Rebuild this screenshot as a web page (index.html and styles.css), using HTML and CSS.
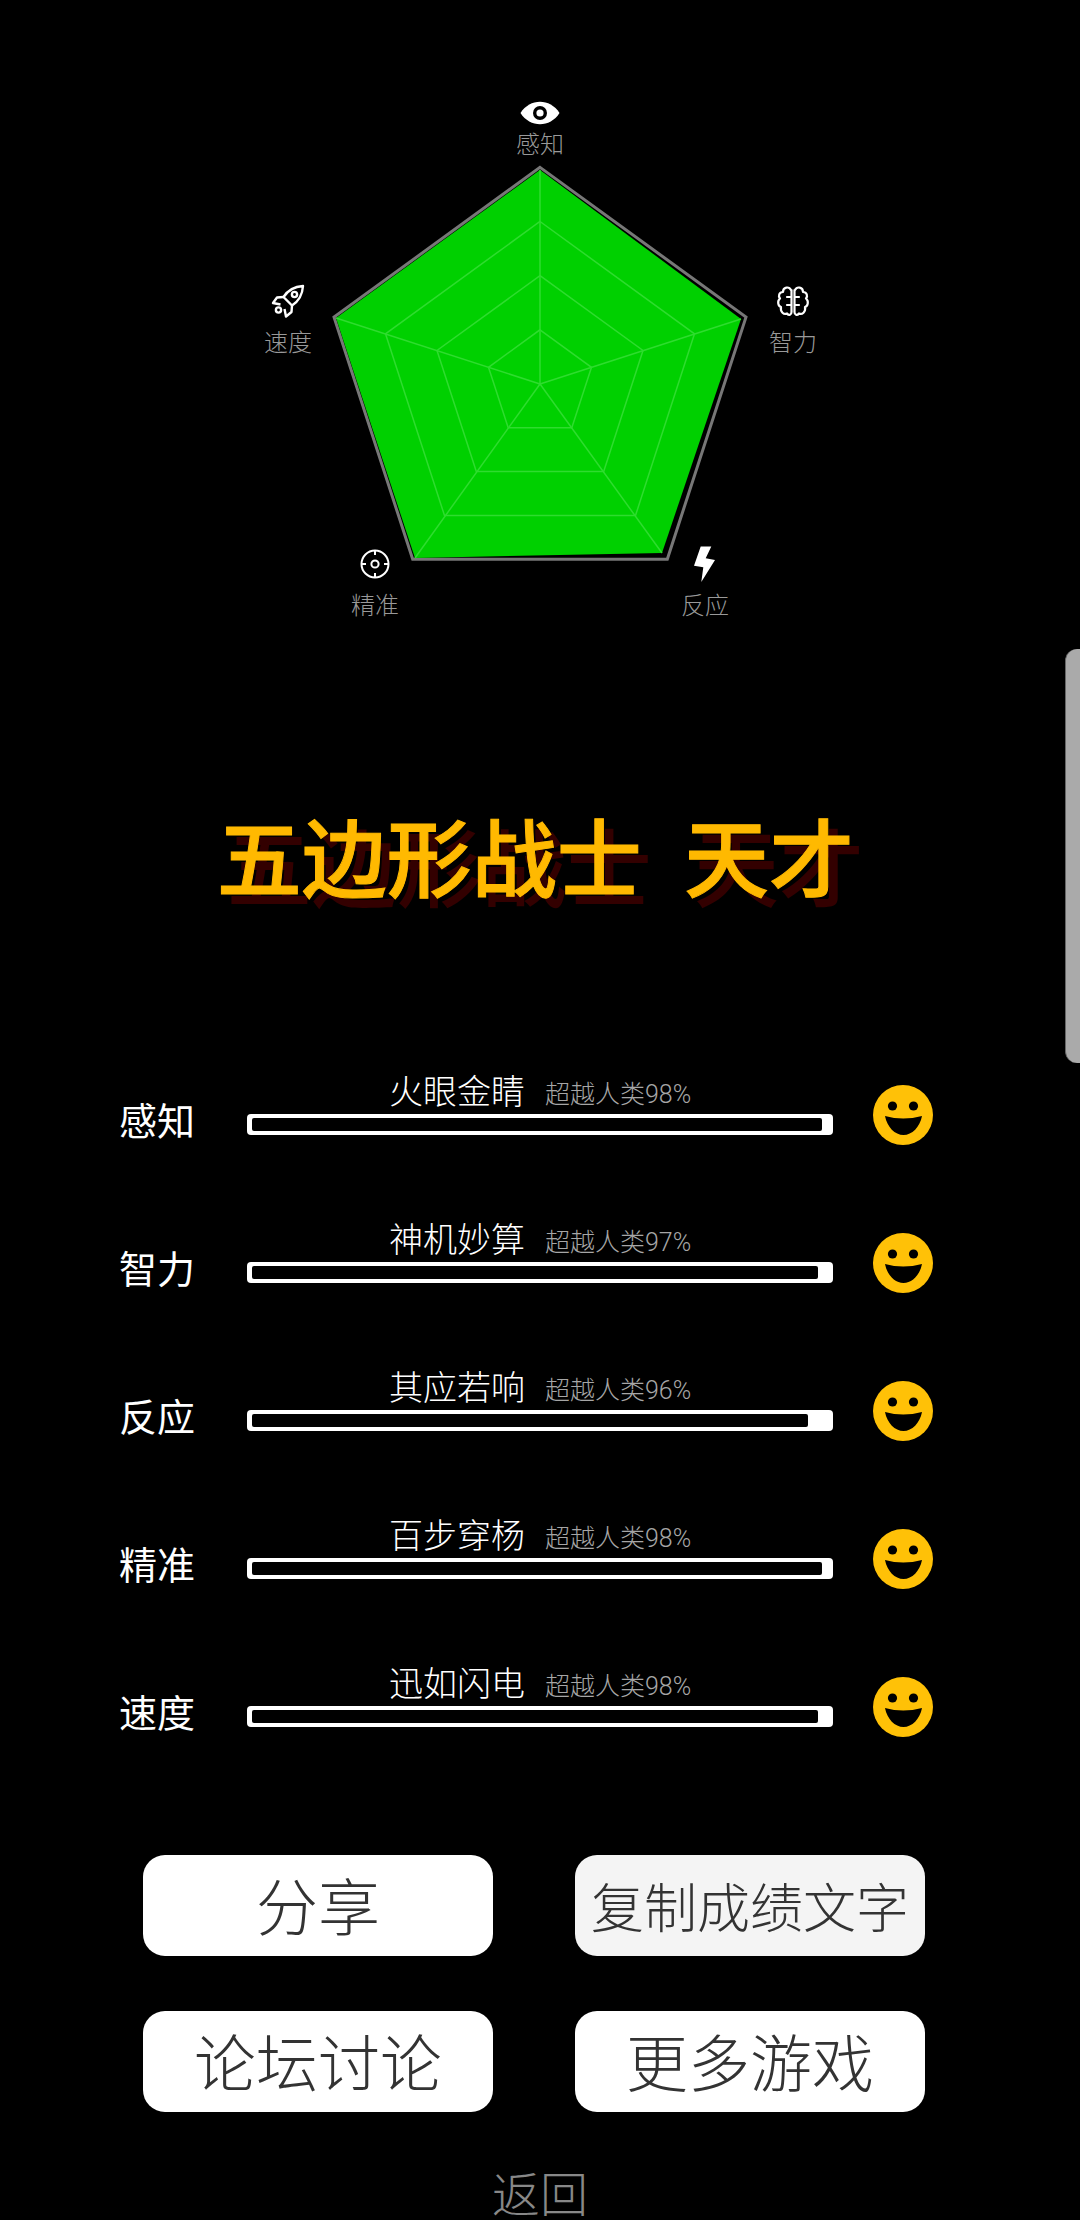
FILE: index.html
```html
<!DOCTYPE html>
<html lang="zh-CN">
<head>
  <meta charset="UTF-8" />
  <meta name="viewport" content="width=device-width, initial-scale=1.0"/>
  <title>五边形战士</title>
  <link rel="stylesheet" href="styles.css">
</head>
<body>

  <svg class="defs">
    <symbol id="face" viewBox="0 0 60 60">
      <circle cx="30" cy="30" r="30" fill="#ffc107"/>
      <circle cx="19.5" cy="21" r="4.6" fill="#000"/>
      <circle cx="40.5" cy="21" r="4.6" fill="#000"/>
      <path d="M12 31 Q30 36 49 31 C47 42 39 50 30.5 50 C22 50 14 42 12 31Z" fill="#000"/>
    </symbol>
  </svg>

  <div class="radar">
    <svg class="chart" viewBox="0 0 1080 680">
      <g transform="translate(540 384)">
        <polygon class="outer" points="0,-216.6 206,-66.9 127.3,175.2 -127.3,175.2 -206,-66.9"/>
        <polygon class="fill" points="0,-214 201,-65 122,169 -125,174 -204,-66"/>
        <polygon class="grid" points="0,-54.2 51.5,-16.7 31.8,43.8 -31.8,43.8 -51.5,-16.7"/>
        <polygon class="grid" points="0,-108.3 103,-33.5 63.7,87.6 -63.7,87.6 -103,-33.5"/>
        <polygon class="grid" points="0,-162.5 154.5,-50.2 95.5,131.5 -95.5,131.5 -154.5,-50.2"/>
        <path class="grid" d="M0 0 L0 -214 M0 0 L201 -65 M0 0 L122 169 M0 0 L-125 174 M0 0 L-204 -66"/>
      </g>
    </svg>

    <div class="axis axis-top">
      <svg class="axis-icon" width="40" height="36" viewBox="-20 -18 40 36">
        <path d="M-19.5 0 C-10 -15 10 -15 19.5 0 C10 15 -10 15 -19.5 0Z" fill="#fff"/>
        <circle r="7" fill="#000"/>
        <circle r="3.6" fill="#fff"/>
      </svg>
      <span>感知</span>
    </div>

    <div class="axis axis-right">
      <svg class="axis-icon" width="36" height="36" viewBox="0 0 36 36">
        <g fill="none" stroke="#fff" stroke-width="2.2" stroke-linejoin="round" stroke-linecap="round">
          <path id="lobe" d="M16 7 C14 3 8 4 8 9 C4 9 3 13 5 15.5 C2 18 3 23 6 24 C5 29 9 32 12 30.5 C14 33 16.5 32 16.5 29 L16.5 7Z M16.5 14 L12 14 M16.5 22 L12 22"/>
          <use href="#lobe" transform="translate(36 0) scale(-1 1)"/>
        </g>
      </svg>
      <span>智力</span>
    </div>

    <div class="axis axis-br">
      <svg class="axis-icon" width="22" height="36" viewBox="0 0 22 36">
        <polygon points="6.7,0.5 17.3,0.5 11.7,12.3 21,14 7.3,36 9.3,21.3 0,19.7" fill="#fff"/>
      </svg>
      <span>反应</span>
    </div>

    <div class="axis axis-bl">
      <svg class="axis-icon" width="30" height="36" viewBox="-15 -18 30 36">
        <g fill="none" stroke="#fff" stroke-width="2">
          <circle r="13.5"/>
          <circle r="3.6"/>
          <path d="M0 -13.5 V-9 M0 13.5 V9 M-13.5 0 H-9 M13.5 0 H9"/>
        </g>
      </svg>
      <span>精准</span>
    </div>

    <div class="axis axis-left">
      <svg class="axis-icon" width="34" height="36" viewBox="-1 -2 34 36">
        <g fill="none" stroke="#fff" stroke-width="2.4" stroke-linejoin="round">
          <path d="M31 1 C23 1.5 16 5 11.5 12 L20 20.5 C27 16 30.5 9 31 1Z"/>
          <circle cx="22.5" cy="9.5" r="2.6"/>
          <path d="M11.5 12 L5 12.5 L1 18 L8.5 19.5"/>
          <path d="M20 20.5 L19.5 27 L14 31.5 L12.5 24"/>
          <circle cx="6.5" cy="25" r="2.6"/>
        </g>
      </svg>
      <span>速度</span>
    </div>
  </div>

  <h1 class="rank">五边形战士  天才</h1>

  <div class="stats">
    <div class="stat">
      <div class="stat-name">感知</div>
      <div class="stat-main">
        <div class="stat-caption"><span class="nick">火眼金睛</span><span class="beat">超越人类98%</span></div>
        <div class="bar"><div class="bar-fill" style="width: 570px"></div></div>
      </div>
      <svg class="face"><use href="#face"/></svg>
    </div>
    <div class="stat">
      <div class="stat-name">智力</div>
      <div class="stat-main">
        <div class="stat-caption"><span class="nick">神机妙算</span><span class="beat">超越人类97%</span></div>
        <div class="bar"><div class="bar-fill" style="width: 566px"></div></div>
      </div>
      <svg class="face"><use href="#face"/></svg>
    </div>
    <div class="stat">
      <div class="stat-name">反应</div>
      <div class="stat-main">
        <div class="stat-caption"><span class="nick">其应若响</span><span class="beat">超越人类96%</span></div>
        <div class="bar"><div class="bar-fill" style="width: 556px"></div></div>
      </div>
      <svg class="face"><use href="#face"/></svg>
    </div>
    <div class="stat">
      <div class="stat-name">精准</div>
      <div class="stat-main">
        <div class="stat-caption"><span class="nick">百步穿杨</span><span class="beat">超越人类98%</span></div>
        <div class="bar"><div class="bar-fill" style="width: 570px"></div></div>
      </div>
      <svg class="face"><use href="#face"/></svg>
    </div>
    <div class="stat">
      <div class="stat-name">速度</div>
      <div class="stat-main">
        <div class="stat-caption"><span class="nick">迅如闪电</span><span class="beat">超越人类98%</span></div>
        <div class="bar"><div class="bar-fill" style="width: 566px"></div></div>
      </div>
      <svg class="face"><use href="#face"/></svg>
    </div>
  </div>

  <div class="actions">
    <button>分享</button>
    <button class="copy">复制成绩文字</button>
    <button>论坛讨论</button>
    <button>更多游戏</button>
  </div>

  <div class="back">返回</div>

  <div class="edge-handle"></div>

</body>
</html>
```

FILE: styles.css
```css
html, body {
  height: 2220px;
}

body {
  margin: 0;
  position: relative;
  overflow: hidden;
  background: #000;
  color: #fff;
  font-family: Roboto, "Noto Sans CJK SC", sans-serif;
}

.defs {
  display: none;
}

/* radar chart */
.radar {
  position: relative;
  height: 802px;
}

.chart {
  display: block;
  width: 1080px;
  height: 680px;
}

.outer {
  fill: none;
  stroke: #777;
  stroke-width: 3;
}

.fill {
  fill: #00d000;
}

.grid {
  fill: none;
  stroke: #2fdc2f;
  stroke-width: 1.5;
}

.axis {
  position: absolute;
  width: 100px;
  display: flex;
  flex-direction: column;
  align-items: center;
  gap: 12px;
  font-size: 24px;
  font-weight: 300;
  line-height: 24px;
  color: #999;
}

.axis-icon {
  display: block;
}

.axis-top {
  left: 490px;
  top: 95px;
  gap: 2px;
}

.axis-right {
  left: 743px;
  top: 283px;
}

.axis-br {
  left: 655px;
  top: 546px;
}

.axis-bl {
  left: 325px;
  top: 546px;
}

.axis-left {
  left: 238px;
  top: 283px;
}

/* rank title */
.rank {
  margin: 0;
  padding-right: 9px;
  height: 120px;
  line-height: 120px;
  text-align: center;
  white-space: pre;
  font-size: 85px;
  font-weight: 500;
  color: #ffb900;
  -webkit-text-stroke: 1px #ffb900;
  text-shadow: 10px 10px 0 #330000;
}

/* stat rows */
.stats {
  margin-top: 119px;
  padding-left: 119px;
}

.stat {
  display: grid;
  grid-template-columns: 128px 586px 60px;
  height: 148px;
  align-items: start;
}

.stat-name {
  margin-top: 57px;
  font-size: 38px;
  line-height: 48px;
}

.stat-main {
  margin-top: 30px;
}

.stat-caption {
  display: grid;
  grid-template-columns: 1fr 1fr;
  grid-template-rows: 43px;
  column-gap: 20px;
  padding-right: 10px;
  align-items: center;
}

.nick {
  text-align: right;
  font-size: 34px;
  line-height: 41px;
  font-weight: 300;
}

.beat {
  margin-top: 4px;
  font-size: 25px;
  line-height: 40px;
  font-weight: 300;
  color: #a6a6a6;
}

.bar {
  box-sizing: border-box;
  width: 586px;
  height: 21px;
  padding: 4px 5px;
  background: #fff;
  border-radius: 4px;
}

.bar-fill {
  height: 13px;
  background: #000;
  border-radius: 2px;
}

.face {
  width: 60px;
  height: 60px;
  margin: 44px 0 0 40px;
}

/* buttons */
.actions {
  margin-top: 74px;
  padding-left: 143px;
  display: grid;
  grid-template-columns: 350px 350px;
  grid-auto-rows: 101px;
  column-gap: 82px;
  row-gap: 55px;
}

button {
  padding: 9px 0 0;
  border: none;
  border-radius: 22px;
  background: #fff;
  color: #333;
  font-family: inherit;
  font-size: 62px;
  font-weight: 300;
  line-height: 90px;
}

.copy {
  background: #f4f4f4;
  font-size: 53px;
}

.back {
  margin-top: 61px;
  text-align: center;
  font-size: 48px;
  font-weight: 300;
  line-height: 46px;
  color: #888;
}

/* system edge panel handle */
.edge-handle {
  position: absolute;
  right: 0;
  top: 649px;
  width: 14px;
  height: 414px;
  background: #aaa;
  border-left: 1px solid #666;
  border-radius: 12px 0 0 12px;
}
```
